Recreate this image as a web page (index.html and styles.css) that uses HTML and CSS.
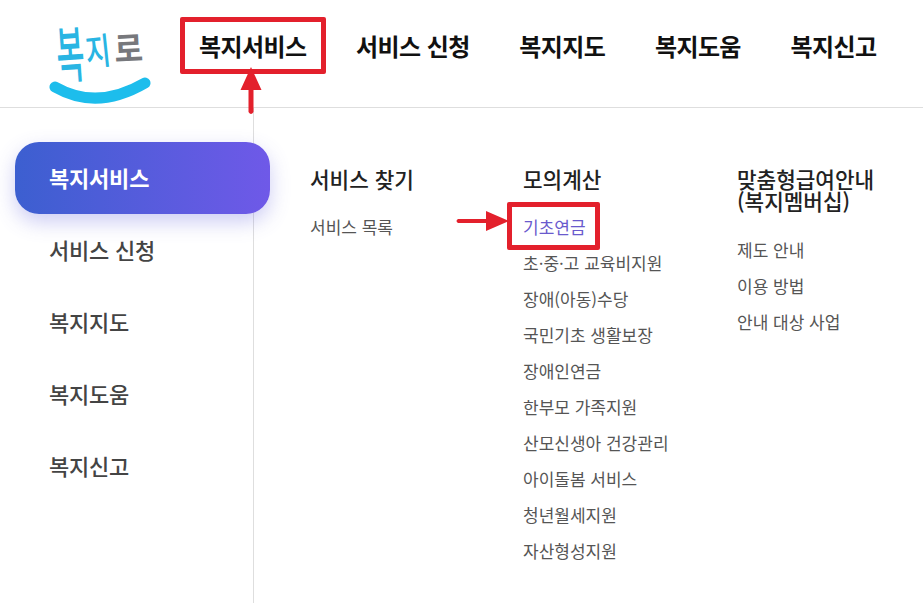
FILE: index.html
```html
<!DOCTYPE html>
<html lang="ko">
<head>
    <meta charset="utf-8">
    <title>복지로</title>
    <link rel="stylesheet" href="styles.css">
</head>
<body>
    <header class="top">
        <a class="logo">
            <svg width="110" height="107" viewBox="0 0 110 107">
                <text class="logo-a" transform="translate(12 78) rotate(-4) scale(0.95 1.9)">복</text>
                <text class="logo-b" transform="translate(41 66) rotate(-6) scale(0.85 1.15)">지</text>
                <text class="logo-c" transform="translate(69 62) rotate(-3) scale(1 1.1)">로</text>
                <path class="logo-smile" d="M9 87 Q51 111 99 83"/>
            </svg>
        </a>
        <nav class="gnb">
            <a class="gnb-item">복지서비스</a>
            <a class="gnb-item">서비스 신청</a>
            <a class="gnb-item">복지지도</a>
            <a class="gnb-item">복지도움</a>
            <a class="gnb-item">복지신고</a>
        </nav>
    </header>
    <main class="wrap">
        <aside class="side">
            <a class="side-item on">복지서비스</a>
            <a class="side-item">서비스 신청</a>
            <a class="side-item">복지지도</a>
            <a class="side-item">복지도움</a>
            <a class="side-item">복지신고</a>
        </aside>
        <section class="cols">
            <div class="col col1">
                <h3>서비스 찾기</h3>
                <ul>
                    <li>서비스 목록</li>
                </ul>
            </div>
            <div class="col col2">
                <h3>모의계산</h3>
                <ul>
                    <li class="on">기초연금</li>
                    <li>초·중·고 교육비지원</li>
                    <li>장애(아동)수당</li>
                    <li>국민기초 생활보장</li>
                    <li>장애인연금</li>
                    <li>한부모 가족지원</li>
                    <li>산모신생아 건강관리</li>
                    <li>아이돌봄 서비스</li>
                    <li>청년월세지원</li>
                    <li>자산형성지원</li>
                </ul>
            </div>
            <div class="col col3">
                <h3>맞춤형급여안내<br>(복지멤버십)</h3>
                <ul>
                    <li>제도 안내</li>
                    <li>이용 방법</li>
                    <li>안내 대상 사업</li>
                </ul>
            </div>
        </section>
    </main>

    <!-- red marks drawn over the page -->
    <div class="mark mark-nav"></div>
    <div class="mark mark-sub"></div>
    <svg class="arrow arrow-up" width="24" height="50" viewBox="0 0 24 50">
        <path d="M12 1 L22.5 24 L14.5 24 L14.5 46 Q12 50 9.5 46 L9.5 24 L1.5 24 Z"/>
    </svg>
    <svg class="arrow arrow-right" width="56" height="24" viewBox="0 0 56 24">
        <path d="M54 12 L31 2 L31 10 L3 10 Q0 12 3 14 L31 14 L31 22 Z"/>
    </svg>
</body>
</html>
```

FILE: styles.css
```css
* { box-sizing: border-box; }
html, body { margin: 0; padding: 0; }
body {
    width: 923px;
    height: 603px;
    overflow: hidden;
    background: #fff;
    color: #333;
    font-family: "Noto Sans CJK KR", "Noto Sans", sans-serif;
}
ul { list-style: none; margin: 0; padding: 0; }

.top {
    display: flex;
    height: 108px;
    border-bottom: 1px solid #dedede;
}
.logo { display: block; width: 199px; padding-left: 46px; }
.logo svg { display: block; }
.logo-a, .logo-b { fill: #29b5e3; font-size: 32px; font-weight: 500; }
.logo-c { fill: #77787c; font-size: 31px; font-weight: 700; }
.logo-smile { fill: none; stroke: #1dbdec; stroke-width: 11px; stroke-linecap: round; }

.gnb { display: flex; gap: 49.7px; padding-top: 29px; }
.gnb-item {
    color: #111;
    font-size: 24px;
    line-height: 34px;
    font-weight: 700;
    letter-spacing: -0.6px;
}

.wrap { display: flex; height: 495px; }
.side {
    width: 254px;
    flex: none;
    padding: 34px 0 0 15px;
    border-right: 1px solid #dedede;
}
.side-item {
    display: block;
    width: 255px;
    height: 72px;
    padding-left: 34px;
    color: #444;
    font-size: 22px;
    line-height: 70px;
    font-weight: 500;
    letter-spacing: -0.2px;
}
.side-item.on {
    color: #fff;
    font-weight: 700;
    border-radius: 24px;
    background: linear-gradient(90deg, #3c5fd0, #6f59e8);
    box-shadow: 0 8px 20px rgba(90, 90, 220, 0.3);
}

.cols { display: flex; padding-top: 60px; }
.col { flex: none; }
.col1 { width: 213px; margin-left: 56px; }
.col2 { width: 214px; }
.col h3 {
    margin: 0 0 19px;
    color: #222;
    font-size: 21.3px;
    line-height: 22px;
    font-weight: 500;
}
.col3 ul { margin-top: 20px; }
.col li {
    height: 36px;
    color: #555;
    font-size: 17px;
    line-height: 36px;
}
.col li.on { color: #6a5acd; }

.mark {
    position: absolute;
    border: 5px solid #e3202c;
    border-radius: 2px;
}
.mark-nav { left: 180px; top: 17px; width: 146px; height: 57px; }
.mark-sub { left: 507px; top: 202px; width: 93px; height: 48px; }
.arrow { position: absolute; fill: #e3202c; }
.arrow-up { left: 239px; top: 66px; }
.arrow-right { left: 455px; top: 209px; }
```
